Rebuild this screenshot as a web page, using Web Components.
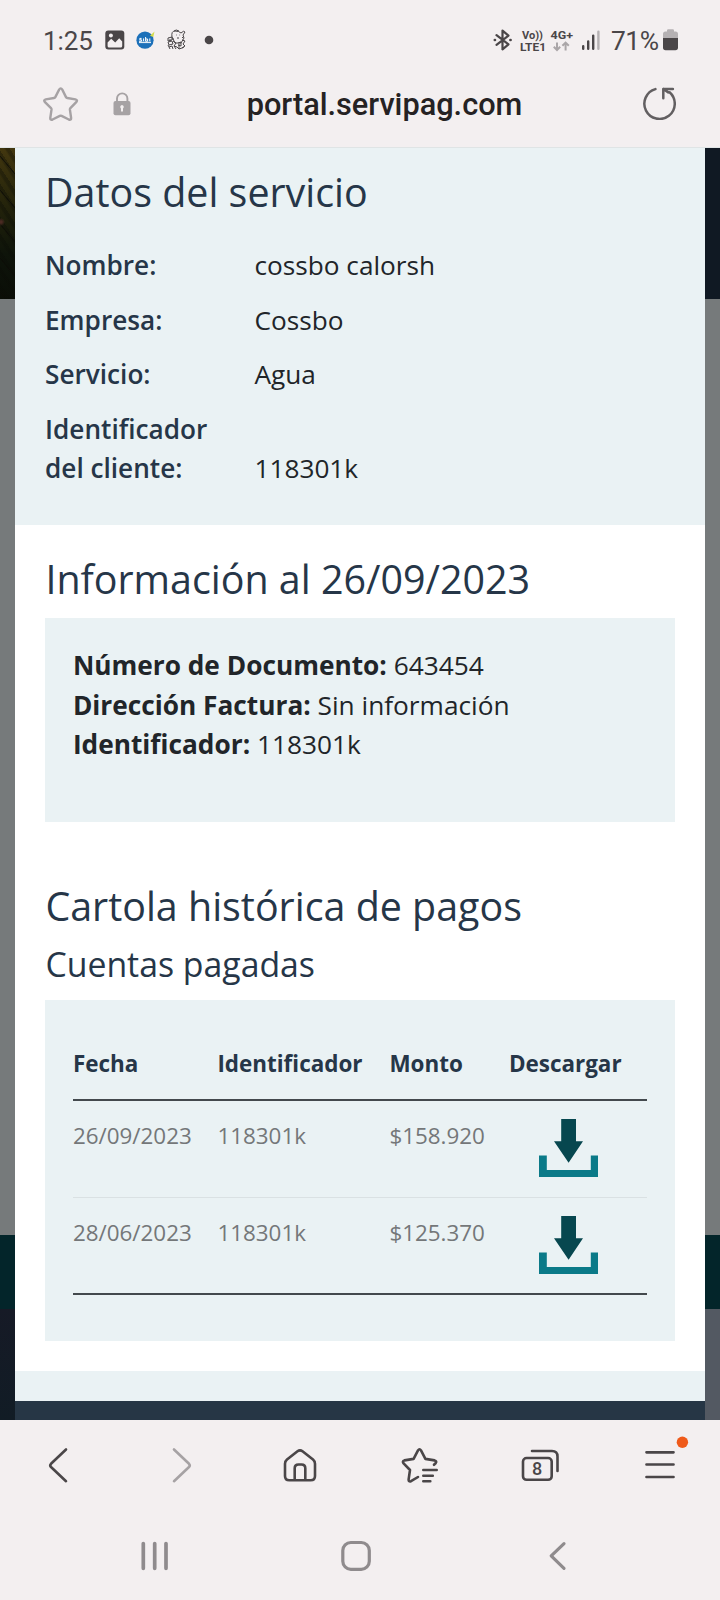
<!DOCTYPE html>
<html lang="es">
<head>
<meta charset="utf-8">
<title>portal.servipag.com</title>
<style>
html,body{margin:0;height:1600px;overflow:hidden;background:#f3eff0}
</style>
</head>
<body>
<phone-screen></phone-screen>
<script>
function define(name, html) {
  const t = document.createElement('template');
  t.innerHTML = html;
  customElements.define(name, class extends HTMLElement {
    constructor() {
      super();
      this.attachShadow({mode: 'open'}).appendChild(t.content.cloneNode(true));
    }
  });
}

define('status-bar', `
<style>
:host{display:flex;align-items:center;height:80px;box-sizing:border-box;color:#4a4648;font:400 26px/30px Roboto,sans-serif}
.time{margin-left:43px;width:50px;letter-spacing:-.1px;white-space:nowrap;padding-top:1px}
svg{display:block;flex:none;overflow:visible}
.pic{margin-left:11.5px}.sb{margin-left:11.5px}.mono{margin-left:11px}.dot{margin-left:17px}
.right{display:flex;align-items:center;margin-left:auto;margin-right:42.5px}
.bat{font-size:26.4px;letter-spacing:-.5px;margin-left:10px;width:51.5px;white-space:nowrap;padding-top:1px}
</style>
<span class="time">1:25</span>
<svg class="pic" width="20" height="20" viewBox="0 0 20 20"><rect x=".3" y=".5" width="19" height="19" rx="3" fill="#4a4648"/><path d="M2.6 16v-3.6l3.6-3.6 4 3.6 4-4.2 3 3.2V16a1.6 1.6 0 0 1-1.6 1.6H4.2A1.6 1.6 0 0 1 2.6 16z" fill="#f3eff0"/><circle cx="5.9" cy="5.4" r="2" fill="#f3eff0"/></svg>
<svg class="sb" width="20" height="20" viewBox="0 0 20 20"><circle cx="9" cy="10.2" r="8.6" fill="#1c70b9"/><path d="M14 5.8l4.5-4.2-1.2 5.3z" fill="#d4dc4a"/><path d="M3 11.7h12v1.4H3z" fill="#fff" opacity=".85"/><path d="M5.6 8.4H3.8v1.4h1.8v1.4H3M7.6 8.4v2.8M9.6 7v4.2h2V9h-2M13.8 8.4v2.8" fill="none" stroke="#fff" stroke-width="1"/></svg>
<svg class="mono" width="20" height="22" viewBox="0 0 20 22" fill="none" stroke="#4a4648" stroke-width="1"><path d="M5 8Q4 2 8 2t6 2q3-3 4-1l-2 3 1 3-3 5H8zM7 2q2-2 5 0M9 6h.6M12.5 6h.6M10 9h2M1 9l4-1v3L1 12zM1 13l4-1 1 3-4 1zM6 12l3 2-2 3 3 1M11 14l3-1v4l-3-1M15 11l3 1-2 3 2 2-3 2M2 18l3-1 1 3M7 17l2 3M10 18l2 2 3-1 2-1M6 9v2M15 8l1 1M2 11h2M12 15v5M1 16l2 4"/></svg>
<svg class="dot" width="10" height="10" viewBox="0 0 10 10"><circle cx="5" cy="5" r="4.3" fill="#4a4648"/></svg>
<div class="right">
<svg width="20" height="24" viewBox="0 0 20 24" fill="none" stroke="#4a4648" stroke-width="2.2" stroke-linejoin="round" stroke-linecap="round"><path d="M3.5 7.2l12 9.2-6 5V2.6l6 5-12 9.2"/><path d="M1.8 12h.2M17.4 12h.2" stroke-width="2.6"/></svg>
<svg width="54" height="28" viewBox="0 -2 54 28" style="margin-left:7px;margin-right:1px" fill="#4a4648"><text x="2" y="11.2" font-size="10.8" font-weight="700" font-family="Roboto,sans-serif" textLength="21" lengthAdjust="spacingAndGlyphs">Vo))</text><text x="0" y="23" font-size="11.8" font-weight="700" font-family="Roboto,sans-serif" textLength="26" lengthAdjust="spacingAndGlyphs">LTE1</text><text x="30.5" y="11.2" font-size="10.8" font-weight="700" font-family="Roboto,sans-serif" textLength="22.5" lengthAdjust="spacingAndGlyphs">4G+</text><path d="M37 14.4v7.6M33.8 18.8L37 22l3.2-3.2M45.6 22.5v-7.6M42.4 17.8l3.2-3.2 3.2 3.2" fill="none" stroke="#aaa6a8" stroke-width="2"/></svg>
<svg width="20" height="20" viewBox="0 0 20 20" style="margin-left:6px"><path d="M2.2 16.2v2.6M7.2 11.5v7.3M12.2 5.6v13.2" stroke="#4a4648" stroke-width="2.4" stroke-linecap="round"/><path d="M17.4 1.8v17" stroke="#b5b1b3" stroke-width="2.4" stroke-linecap="round"/></svg>
<span class="bat">71%</span>
<svg width="15" height="22" viewBox="0 0 15 22"><path d="M0 9V5Q0 2.4 2.4 2.4H4V1.4Q4 .3 5.2.3h4.6Q11 .3 11 1.4v1h1.6Q15 2.4 15 5v4z" fill="#b5b1b3"/><path d="M0 9h15v9.6q0 2.6-2.6 2.6H2.6Q0 21.2 0 18.6z" fill="#4a4648"/></svg>
</div>`);

define('address-bar', `
<style>
:host{display:grid;grid-template-columns:43px 36px 34px 18px 1fr 34px 43px;align-items:center;height:68px;padding-bottom:15px;box-sizing:border-box;border-bottom:1px solid #dfe4e5}
svg{display:block}
.url{text-align:center;font:500 30.7px/36px Roboto,sans-serif;color:#252223;white-space:nowrap;padding-right:5px;margin-top:-2px}
</style>
<i></i>
<svg width="36" height="36" viewBox="0 0 36 36" style="margin-top:-4px"><path d="M16.1 2.4Q17.7-.1 19.3 2.4L23 9.9q.4.8 1.3.9l8.1 1.4q2.6.6.8 2.8l-5.8 6q-.6.6-.5 1.5l1.2 8.1q.2 2.6-2.3 1.7l-7.2-3.6q-.9-.4-1.8 0L9.6 32.3q-2.5.9-2.3-1.7l1.2-8.1q.1-.9-.5-1.5L2 15q-1.8-2.2.8-2.8l8.2-1.4q.9-.1 1.3-.9z" transform="translate(0 1.2)" fill="none" stroke="#a6a2a4" stroke-width="2.4"/></svg>
<i></i>
<svg width="18" height="24" viewBox="0 0 18 24" style="margin:-4px 0 0 -.5px"><path d="M4 10V6.6a5.2 5.2 0 0 1 10.4 0V10" fill="none" stroke="#a6a2a4" stroke-width="1.9"/><rect x=".5" y="9" width="17" height="14.3" rx="2" fill="#a6a2a4"/><path d="M9 13a1.9 1.9 0 0 1 1 3.4v3.2H8v-3.2A1.9 1.9 0 0 1 9 13z" fill="#f3eff0"/></svg>
<span class="url">portal.servipag.com</span>
<svg width="34" height="34" viewBox="0 0 34 34" style="margin:-6px 0 0 -1.5px" fill="none" stroke="#625f61" stroke-width="2.5" stroke-linecap="round" stroke-linejoin="round"><path d="M13.4 3.1A15.2 15.2 0 1 0 27.6 6.3M21.3 12.2V3h9.6M21.3 3l5 3.4"/></svg>
<i></i>`);

define('data-row', `
<style>
:host{display:grid;grid-template-columns:209.5px 1fr;align-items:end;margin-bottom:15.2px;font:400 26.2px/39.4px "Open Sans",sans-serif;color:#212529}
.k{font-weight:600;color:#263648}
</style><span class="k"><slot name="k"></slot></span><span><slot></slot></span>`);

define('download-icon', `
<style>:host{display:block;width:60px;height:60px}svg{display:block}</style>
<svg width="60" height="60" viewBox="0 0 60 60"><path d="M22.2 0h14.8v22.3h7L29.6 43.7 15 22.3h7.2z" fill="#07474f"/><path d="M0 36.5h7.8v14.6h44V36.5H59V58H0z" fill="#0b7a88"/></svg>`);

define('pay-row', `
<style>
:host{display:grid;grid-template-columns:144.5px 172px 149.5px 1fr;height:97px;box-sizing:border-box;border-bottom:1.5px solid #dae1e3;font:400 22.4px/34px "Open Sans",sans-serif;color:#747779;padding-top:18px}
:host([last]){border-bottom:2px solid #43494d}
</style><span><slot name="d"></slot></span><span><slot name="i"></slot></span><span><slot name="m"></slot></span><download-icon></download-icon>`);

define('pay-table', `
<style>
:host{display:block;background:#eaf2f4;height:341px;box-sizing:border-box;padding:46px 28.5px 0 27.5px}
.h{display:grid;grid-template-columns:144.5px 172px 119.5px 1fr;font:700 22.45px/35px "Open Sans",sans-serif;color:#263648;height:55px;box-sizing:border-box;border-bottom:2px solid #43494d}
</style>
<div class="h"><span>Fecha</span><span>Identificador</span><span>Monto</span><span>Descargar</span></div>
<pay-row><span slot="d">26/09/2023</span><span slot="i">118301k</span><span slot="m">$158.920</span></pay-row>
<pay-row last><span slot="d">28/06/2023</span><span slot="i">118301k</span><span slot="m">$125.370</span></pay-row>`);

define('service-modal', `
<style>
:host{display:block;background:#fff;height:1272px;font-family:"Open Sans",sans-serif;color:#212529}
h2,h3{margin:0;font-weight:400;color:#263648;white-space:nowrap}
h2{font-size:39.4px;line-height:48px}
h3{font-size:33.8px;line-height:42px}
.top{background:#eaf2f4;height:377px;box-sizing:border-box;padding:20px 30px 0}
.top h2{margin-bottom:30px}
.main{height:846px;box-sizing:border-box;padding:30px 30px 0 30.4px}
.box{background:#eaf2f4;height:204px;box-sizing:border-box;margin:15px 0 60px;padding:28.3px 27.5px;font-size:26.25px;line-height:39.3px}
h3{margin:12.5px 0 15.5px}
.strip{background:#eaf2f4;height:30px}
.dark{background:#263645;height:19px}
</style>
<div class="top"><h2>Datos del servicio</h2>
<data-row><span slot="k">Nombre:</span>cossbo calorsh</data-row>
<data-row><span slot="k">Empresa:</span>Cossbo</data-row>
<data-row><span slot="k">Servicio:</span>Agua</data-row>
<data-row><span slot="k">Identificador<br>del cliente:</span>118301k</data-row></div>
<div class="main"><h2>Información al 26/09/2023</h2>
<div class="box"><div><b>Número de Documento:</b> 643454</div><div><b>Dirección Factura:</b> Sin información</div><div><b>Identificador:</b> 118301k</div></div>
<h2>Cartola histórica de pagos</h2><h3>Cuentas pagadas</h3>
<pay-table></pay-table></div>
<div class="strip"></div><div class="dark"></div>`);

define('page-edge', `
<style>
:host{display:flex;flex-direction:column}
div{flex:none}
.a{height:151px;background:#101923}
.b{height:936px;background:#767a7b}
.c{height:74px;background:#03252a}
.d{flex:1;background:#535962}
:host([left]) .a{background:radial-gradient(circle at 1px 74px,#4a2a22 0 1px,transparent 4px),linear-gradient(50deg,transparent 0 48%,#0c0b06aa 49% 51%,transparent 52%) 0 0/15px 34px,repeating-linear-gradient(57deg,#0000 0 4px,#0a0c0655 6px 9px),linear-gradient(#43370f,#2e2a0c 25%,#1b1d0a 50%,#0e140a 70%,#0a0e07)}
:host([left]) .d{background:linear-gradient(#161a26,#111c25)}
</style><div class="a"></div><div class="b"></div><div class="c"></div><div class="d"></div>`);

define('browser-tools', `
<style>
:host{display:grid;grid-template-columns:repeat(6,120px);height:90px;align-items:center;justify-items:center}
svg{display:block;fill:none;stroke:#4a4648;stroke-width:2.6;stroke-linecap:round;stroke-linejoin:round}
</style>
<svg width="120" height="90" viewBox="0 0 120 90"><path d="M66 29.5L51 43.8q-1.5 1.6 0 3.2L66 61.2"/></svg>
<svg width="120" height="90" viewBox="0 0 120 90" style="stroke:#a6a2a4"><path d="M54 29.5l15 14.3q1.5 1.6 0 3.2L54 61.2"/></svg>
<svg width="120" height="90" viewBox="0 0 120 90"><path d="M57.5 31.3q2.5-2 5 0L73 39.6q2 1.7 2 4.2V56q0 4.3-4.3 4.3H49.3Q45 60.3 45 56V43.8q0-2.5 2-4.2zM54.7 60V48.3q0-3.8 3.8-3.8h3q3.8 0 3.8 3.8V60"/></svg>
<svg width="120" height="90" viewBox="0 0 120 90"><path d="M58 57l-7 4.2q-2.5.8-2.4-1.6L50 50l-6.4-6.6q-1.7-2.3.8-3l9.2-1.5 4.4-8.5q1.5-2.3 3 0l4.4 8.5 9.2 1.5q2.6.7 1 2.9L74 44.8M63.3 50h13.4M63.3 55.7h9.5M63.3 61.2h7"/></svg>
<svg width="120" height="90" viewBox="0 0 120 90"><rect x="43" y="38" width="28.7" height="21.8" rx="3.6"/><path d="M52 31h20q5.5 0 5.5 5.5V51"/><text x="57.2" y="55.2" text-anchor="middle" font-family="Roboto,sans-serif" font-weight="500" font-size="18" fill="#4a4648" stroke="none">8</text></svg>
<svg width="120" height="90" viewBox="0 0 120 90"><path d="M46.5 32.3h27M46.5 44.5h27M46.5 57h27" stroke-width="2.7"/><circle cx="82.4" cy="22.3" r="5.7" fill="#ef5a1a" stroke="none"/></svg>`);

define('system-nav', `
<style>
:host{display:flex;justify-content:center;height:90px;padding-right:8px}
svg{display:block;fill:none;stroke:#8f8b8d;stroke-width:3.2;stroke-linecap:round;stroke-linejoin:round}
</style>
<svg width="202" height="90" viewBox="0 0 202 90"><path d="M90.3 33.5v24.8M101.7 33.5v24.8M113 33.5v24.8" stroke-width="3.7"/></svg>
<svg width="202" height="90" viewBox="0 0 202 90"><rect x="87.8" y="32.5" width="26.5" height="26.8" rx="8"/></svg>
<svg width="202" height="90" viewBox="0 0 202 90"><path d="M107 33.6L94.2 45.9 107 58.4"/></svg>`);

define('phone-screen', `
<style>
:host{display:block;width:720px;height:1600px;background:#f3eff0}
.view{display:grid;grid-template-columns:15px 690px 15px;height:1272px;overflow:hidden}
</style>
<status-bar></status-bar><address-bar></address-bar>
<div class="view"><page-edge left></page-edge><service-modal></service-modal><page-edge></page-edge></div>
<browser-tools></browser-tools><system-nav></system-nav>`);
</script>
</body>
</html>
